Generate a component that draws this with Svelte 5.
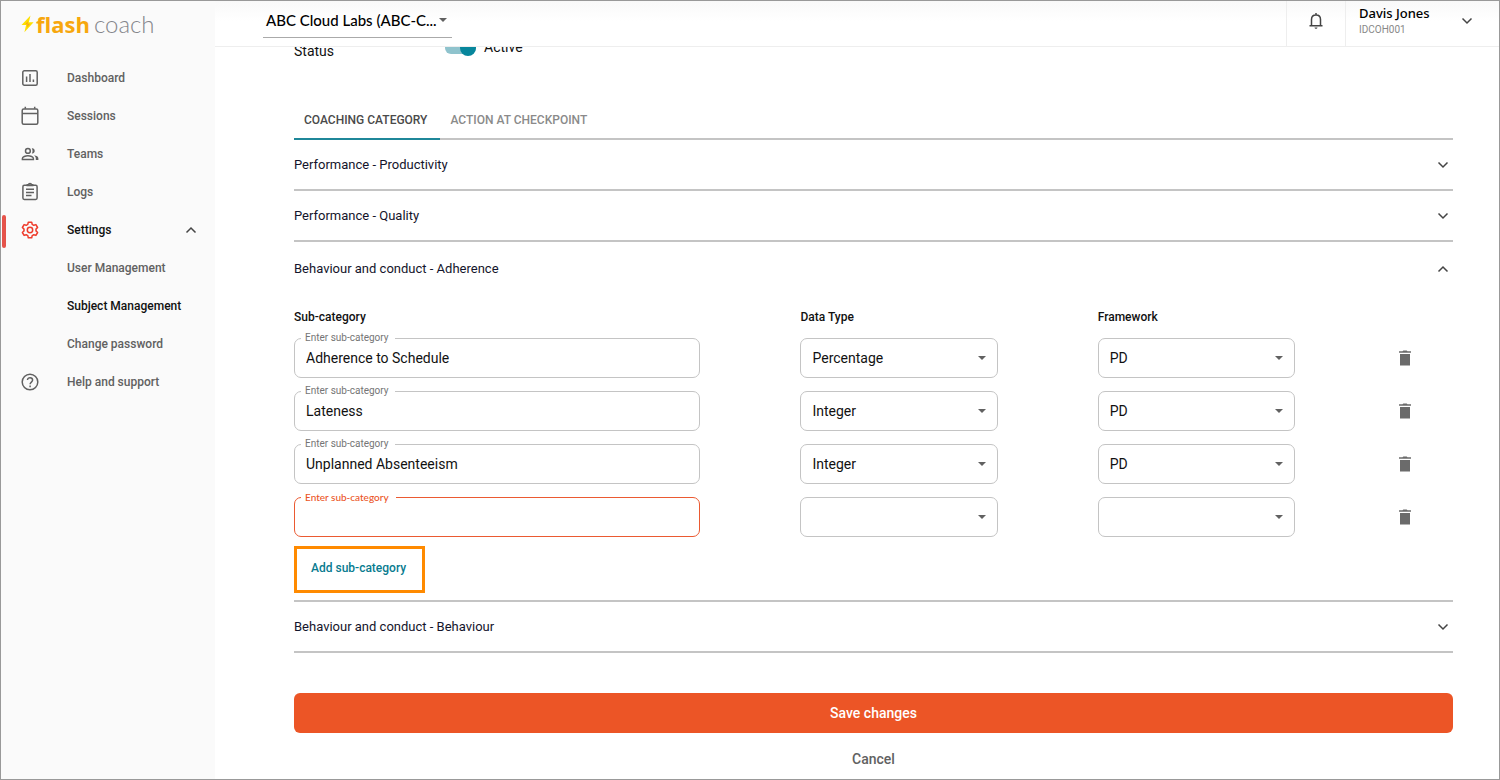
<script>
  const menu = [
    { label: 'Dashboard', icon: 'chart' },
    { label: 'Sessions', icon: 'calendar' },
    { label: 'Teams', icon: 'people' },
    { label: 'Logs', icon: 'clipboard' },
    { label: 'Settings', icon: 'gear', active: true, open: true },
    { label: 'User Management', sub: true },
    { label: 'Subject Management', sub: true, current: true },
    { label: 'Change password', sub: true },
    { label: 'Help and support', icon: 'help' }
  ];

  let rows = $state([
    { name: 'Adherence to Schedule', type: 'Percentage', framework: 'PD' },
    { name: 'Lateness', type: 'Integer', framework: 'PD' },
    { name: 'Unplanned Absenteeism', type: 'Integer', framework: 'PD' },
    { name: '', type: '', framework: '', invalid: true }
  ]);

  let active = $state(true);

  function addRow() {
    rows.push({ name: '', type: '', framework: '' });
  }

  function removeRow(i) {
    rows.splice(i, 1);
  }
</script>

{#snippet chevron(up)}
  <svg class="chevron" class:up viewBox="0 0 12 12" aria-hidden="true">
    <path d="M1.5 3.5 6 8l4.5-4.5" fill="none" stroke="currentColor" stroke-width="1.5" />
  </svg>
{/snippet}

{#snippet caret()}
  <svg class="caret" viewBox="0 0 10 6" aria-hidden="true"><path d="M1 1h8L5 5z" fill="currentColor" /></svg>
{/snippet}

{#snippet section(title, open)}
  <h2>
    <button type="button" class="section-head" class:open aria-expanded={open}>
      <span>{title}</span>
      {@render chevron(open)}
    </button>
  </h2>
{/snippet}

<div class="app">
  <aside>
    <a class="logo" href="#home">
      <svg viewBox="0 0 13 18" aria-hidden="true">
        <path d="M9.500.5.5 9.900h4.600L3.400 17.200 12.600 7.200H7.800z" fill="#fde000" />
        <path d="M7.200 6 4.200 9.200h2.300l-.6 3.300 3.100-3.800H6.500z" fill="#f9a51a" />
      </svg>
      <b>flash</b><span>coach</span>
    </a>
    <nav>
      {#each menu as item}
        <a
          href="#{item.label.toLowerCase().replaceAll(' ', '-')}"
          class:active={item.active}
          class:current={item.current}
        >
          <span class="icon">
            {#if item.icon === 'chart'}
              <svg viewBox="0 0 20 20"><rect x="2.8" y="2.8" width="14.4" height="14.4" rx="1.5" /><path d="M6.6 8.6V14M10 6v8M13.4 11.5V14" /></svg>
            {:else if item.icon === 'calendar'}
              <svg viewBox="0 0 20 20"><rect x="2.2" y="2.9" width="15.6" height="15.4" rx="1.5" /><path d="M2.2 7.4h15.6M5.3.8v2M14.7.8v2" /></svg>
            {:else if item.icon === 'people'}
              <svg viewBox="0 0 20 20"><circle cx="7.9" cy="6.9" r="2.4" /><path d="M2.4 15.4v-1c0-1.6 3-2.7 5.5-2.7s5.5 1.1 5.5 2.7v1z" /><path d="M11.8 4.4c1.600-.3 2.900.9 2.900 2.500s-1.300 2.800-2.900 2.500c1-1.500 1-3.500 0-5zM14 11.200c2.600.4 4.400 1.500 4.400 3.200v1.700h-2.600v-1.700c0-1.300-.7-2.400-1.800-3.200z" fill="currentColor" stroke="none" /></svg>
            {:else if item.icon === 'clipboard'}
              <svg viewBox="0 0 20 20"><rect x="2.900" y="3.300" width="14.200" height="14.200" rx="1.400" /><path d="M6 7.300h8M6 10.400h8M6 13.500h5.500" /><path d="M7.300 3.600V2.800h1.200c.1-1.800 2.900-1.800 3 0h1.200v.8z" /></svg>
            {:else if item.icon === 'gear'}
              <svg viewBox="0 0 20 20"><circle cx="10" cy="10" r="2.700" /><path d="M8.300 2.200h3.400l.5 2.200 1.600.9 2.100-.7 1.700 2.900-1.600 1.600v1.800l1.600 1.600-1.700 2.900-2.100-.7-1.600.9-.5 2.200H8.300l-.5-2.200-1.600-.9-2.100.7-1.700-2.900L4 10.900V9.100L2.400 7.500l1.700-2.900 2.100.7 1.600-.9z" stroke-linejoin="round" /></svg>
            {:else if item.icon === 'help'}
              <svg viewBox="0 0 20 20"><circle cx="10" cy="10" r="7.800" /><path d="M7.500 8.100c0-3.300 5.100-3.200 5.100 0 0 1.900-2.500 2.100-2.500 4.200M10.100 13.600v1.600" /></svg>
            {/if}
          </span>
          <span class="label">{item.label}</span>
          {#if item.open}{@render chevron(true)}{/if}
        </a>
      {/each}
    </nav>
  </aside>

  <div class="page">
    <header>
      <button type="button" class="company">
        <span>ABC Cloud Labs (ABC-C...</span>
        {@render caret()}
      </button>
      <button type="button" class="bell" aria-label="Notifications">
        <svg viewBox="0 0 16 18" aria-hidden="true">
          <path d="M3.500 13.500V7.500c0-2.700 1.800-4.500 4.500-4.500s4.500 1.800 4.500 4.500v6M1.500 13.700h13M8 1v2" fill="none" stroke="currentColor" stroke-width="1.500" />
          <path d="M6.500 15.400h3c-.2 1.700-2.800 1.700-3 0z" fill="currentColor" />
        </svg>
      </button>
      <button type="button" class="user">
        <span class="who"><strong>Davis Jones</strong><small>IDCOH001</small></span>
        {@render chevron(false)}
      </button>
    </header>

    <main>
      <form onsubmit={(e) => e.preventDefault()}>
        <div class="status">
          <span class="status-name">Status</span>
          <label class="switch">
            <input type="checkbox" role="switch" bind:checked={active} />
            <span>Active</span>
          </label>
        </div>

        <div class="tabs" role="tablist">
          <button type="button" role="tab" aria-selected="true">COACHING CATEGORY</button>
          <button type="button" role="tab" aria-selected="false">ACTION AT CHECKPOINT</button>
        </div>

        {@render section('Performance - Productivity', false)}
        {@render section('Performance - Quality', false)}
        {@render section('Behaviour and conduct - Adherence', true)}

        <div class="panel">
          <div class="grid heads">
            <span>Sub-category</span><span>Data Type</span><span>Framework</span>
          </div>
          {#each rows as row, i}
            <div class="grid">
              <div class="field" class:invalid={row.invalid}>
                <label for="name-{i}">Enter sub-category</label>
                <input id="name-{i}" type="text" bind:value={row.name} />
              </div>
              <div class="select">
                <select aria-label="Data Type" bind:value={row.type}>
                  <option value=""></option>
                  <option>Percentage</option>
                  <option>Integer</option>
                </select>
                {@render caret()}
              </div>
              <div class="select">
                <select aria-label="Framework" bind:value={row.framework}>
                  <option value=""></option>
                  <option>PD</option>
                </select>
                {@render caret()}
              </div>
              <button type="button" class="trash" aria-label="Delete" onclick={() => removeRow(i)}>
                <svg viewBox="0 0 14 16" aria-hidden="true"><path d="M2 4h10v11.500H2zM1 1.300h3.500L5.300.5h3.400l.8.800H13v1.500H1z" fill="currentColor" /></svg>
              </button>
            </div>
          {/each}
          <button type="button" class="add" onclick={addRow}>Add sub-category</button>
        </div>

        {@render section('Behaviour and conduct - Behaviour', false)}

        <button type="submit" class="save">Save changes</button>
        <button type="button" class="cancel">Cancel</button>
      </form>
    </main>
  </div>
</div>

<style>
  :global(body) {
    margin: 0;
  }

  .app {
    box-sizing: border-box;
    display: flex;
    height: 100vh;
    overflow: hidden;
    border: 1px solid #999;
    background: #fff;
    color: #111;
    font: 14px/20px Roboto, sans-serif;
  }

  .app * {
    box-sizing: border-box;
  }

  button {
    border: 0;
    padding: 0;
    background: none;
    color: inherit;
    font: inherit;
    cursor: pointer;
  }

  a {
    color: inherit;
    text-decoration: none;
  }

  .chevron {
    flex: none;
    width: 12px;
    height: 12px;
    color: #444;
  }

  .chevron.up {
    transform: rotate(180deg);
  }

  .caret {
    flex: none;
    width: 10px;
    height: 6px;
    color: #616161;
  }

  aside {
    flex: none;
    width: 214px;
    background: #fafafa;
  }

  .logo {
    display: flex;
    align-items: center;
    height: 46px;
    padding-left: 20px;
    font: 22px/28px "Open Sans", sans-serif;
    color: #85868b;
  }

  .logo svg {
    width: 13px;
    height: 18px;
    margin-right: 2px;
  }

  .logo b {
    color: #f7a70e;
    margin-right: 4px;
  }

  .logo span {
    font-family: Lato, sans-serif;
    font-size: 24px;
    font-weight: 300;
  }

  nav {
    display: flex;
    flex-direction: column;
    padding-top: 12px;
  }

  nav a {
    display: flex;
    align-items: center;
    height: 38px;
    padding: 0 18px;
    color: #616161;
    font-size: 12px;
    font-weight: 500;
  }

  .icon {
    display: flex;
    width: 48px;
  }

  .icon svg {
    width: 22px;
    height: 20px;
    fill: none;
    stroke: currentColor;
    stroke-width: 1.5;
  }

  .label {
    flex: 1;
  }

  nav a.active,
  nav a.current {
    color: #111;
  }

  nav a.active {
    position: relative;
  }

  nav a.active::before {
    content: '';
    position: absolute;
    left: 1px;
    top: 4px;
    width: 4px;
    height: 33px;
    border-radius: 2px;
    background: #e5534a;
  }

  nav a.active .icon {
    color: #ee3b2b;
  }

  .page {
    flex: 1;
    min-width: 0;
    display: flex;
    flex-direction: column;
  }

  header {
    flex: none;
    display: flex;
    align-items: stretch;
    height: 46px;
    border-bottom: 1px solid #eee;
    background: linear-gradient(#f9f9f9, #fff 20px);
  }

  .company {
    display: flex;
    align-items: center;
    gap: 1px;
    height: 37px;
    margin-left: 48px;
    margin-right: auto;
    padding: 1px 4px 0 3px;
    border-bottom: 1px solid #aaa;
    font: 500 15px/20px Lato, sans-serif;
    color: #000;
  }

  .bell {
    width: 60px;
    border-left: 1px solid #eee;
    border-right: 1px solid #eee;
    color: #444;
  }

  .bell svg {
    display: block;
    width: 16px;
    height: 18px;
    margin: -6px auto 0;
  }

  .user {
    display: flex;
    justify-content: space-between;
    align-items: center;
    width: 153px;
    padding: 0 26px 5px 13px;
    text-align: left;
  }

  .who {
    display: flex;
    flex-direction: column;
  }

  .who strong {
    font: 500 13px/17px "Noto Sans", sans-serif;
    color: #000;
  }

  .who small {
    font-size: 10px;
    line-height: 16px;
    color: #888;
  }

  main {
    flex: 1;
    min-height: 0;
    overflow: hidden;
    padding: 0 46px 0 79px;
  }

  form {
    display: flex;
    flex-direction: column;
    margin-top: -10px;
  }

  .status {
    display: flex;
    height: 64px;
  }

  .status-name {
    width: 151px;
    padding-top: 4px;
  }

  .switch {
    display: flex;
    align-items: flex-start;
    gap: 8px;
  }

  .switch input {
    appearance: none;
    position: relative;
    width: 31px;
    height: 12px;
    margin: 5px 0 0;
    border-radius: 6px;
    background: #8fc3cd;
  }

  .switch input::before {
    content: '';
    position: absolute;
    top: -2px;
    left: 0;
    width: 16px;
    height: 16px;
    border-radius: 8px;
    background: #07869c;
  }

  .switch input:checked::before {
    left: 15px;
  }

  .tabs {
    display: flex;
    height: 39px;
    border-bottom: 2px solid #c4c4c4;
  }

  .tabs button {
    height: 39px;
    padding: 0 13px 0 10px;
    border-bottom: 2px solid transparent;
    color: #8a8a8a;
    font-size: 12px;
    font-weight: 500;
  }

  .tabs button[aria-selected='true'] {
    border-color: #1f8799;
    color: #4a4a4a;
  }

  h2 {
    margin: 0;
    font: inherit;
  }

  .section-head {
    display: flex;
    justify-content: space-between;
    align-items: center;
    width: 100%;
    height: 51px;
    padding-right: 4px;
    border-bottom: 2px solid #c4c4c4;
    color: #14142b;
    font-size: 13px;
  }

  .section-head.open {
    height: 54px;
    border-bottom: 0;
  }

  .panel {
    padding-bottom: 7px;
    border-bottom: 2px solid #c4c4c4;
  }

  .grid {
    display: grid;
    grid-template-columns: 406fr 197fr 197fr 58fr;
    column-gap: 100px;
    align-items: center;
    margin-bottom: 13px;
  }

  .heads {
    height: 20px;
    margin: 11px 0;
    font-size: 12px;
    font-weight: 500;
  }

  .field,
  .select {
    position: relative;
    display: flex;
    height: 40px;
  }

  .field input,
  .select select {
    appearance: none;
    width: 100%;
    height: 100%;
    margin: 0;
    padding: 0 11px 1px;
    border: 1px solid #c4c4c4;
    border-radius: 7px;
    outline: 0;
    background: #fff;
    color: #111;
    font: inherit;
  }

  .field label {
    position: absolute;
    left: 7px;
    top: -7px;
    padding: 0 7px 0 4px;
    background: #fff;
    color: #757575;
    font-size: 10px;
    line-height: 14px;
  }

  .field.invalid input {
    border-color: #eb5a32;
  }

  .field.invalid label {
    color: #eb5527;
    font-family: Lato, sans-serif;
    font-weight: 500;
  }

  .select .caret {
    position: absolute;
    right: 11px;
    top: 17px;
    pointer-events: none;
  }

  .trash {
    justify-self: start;
    width: 20px;
    height: 22px;
    color: #6b6b6b;
  }

  .trash svg {
    display: block;
    width: 14px;
    height: 16px;
    margin: 0 auto;
  }

  .add {
    display: block;
    height: 47px;
    margin-top: -4px;
    padding: 0 16px 4px 14px;
    border: 3px solid #ff8a00;
    color: #087b8f;
    font-size: 12px;
    font-weight: 500;
  }

  .save {
    height: 40px;
    margin-top: 40px;
    border-radius: 6px;
    background: #ec5526;
    color: #fff;
    font-weight: 500;
  }

  .cancel {
    align-self: center;
    margin-top: 16px;
    color: #616161;
    font-weight: 500;
  }
</style>
